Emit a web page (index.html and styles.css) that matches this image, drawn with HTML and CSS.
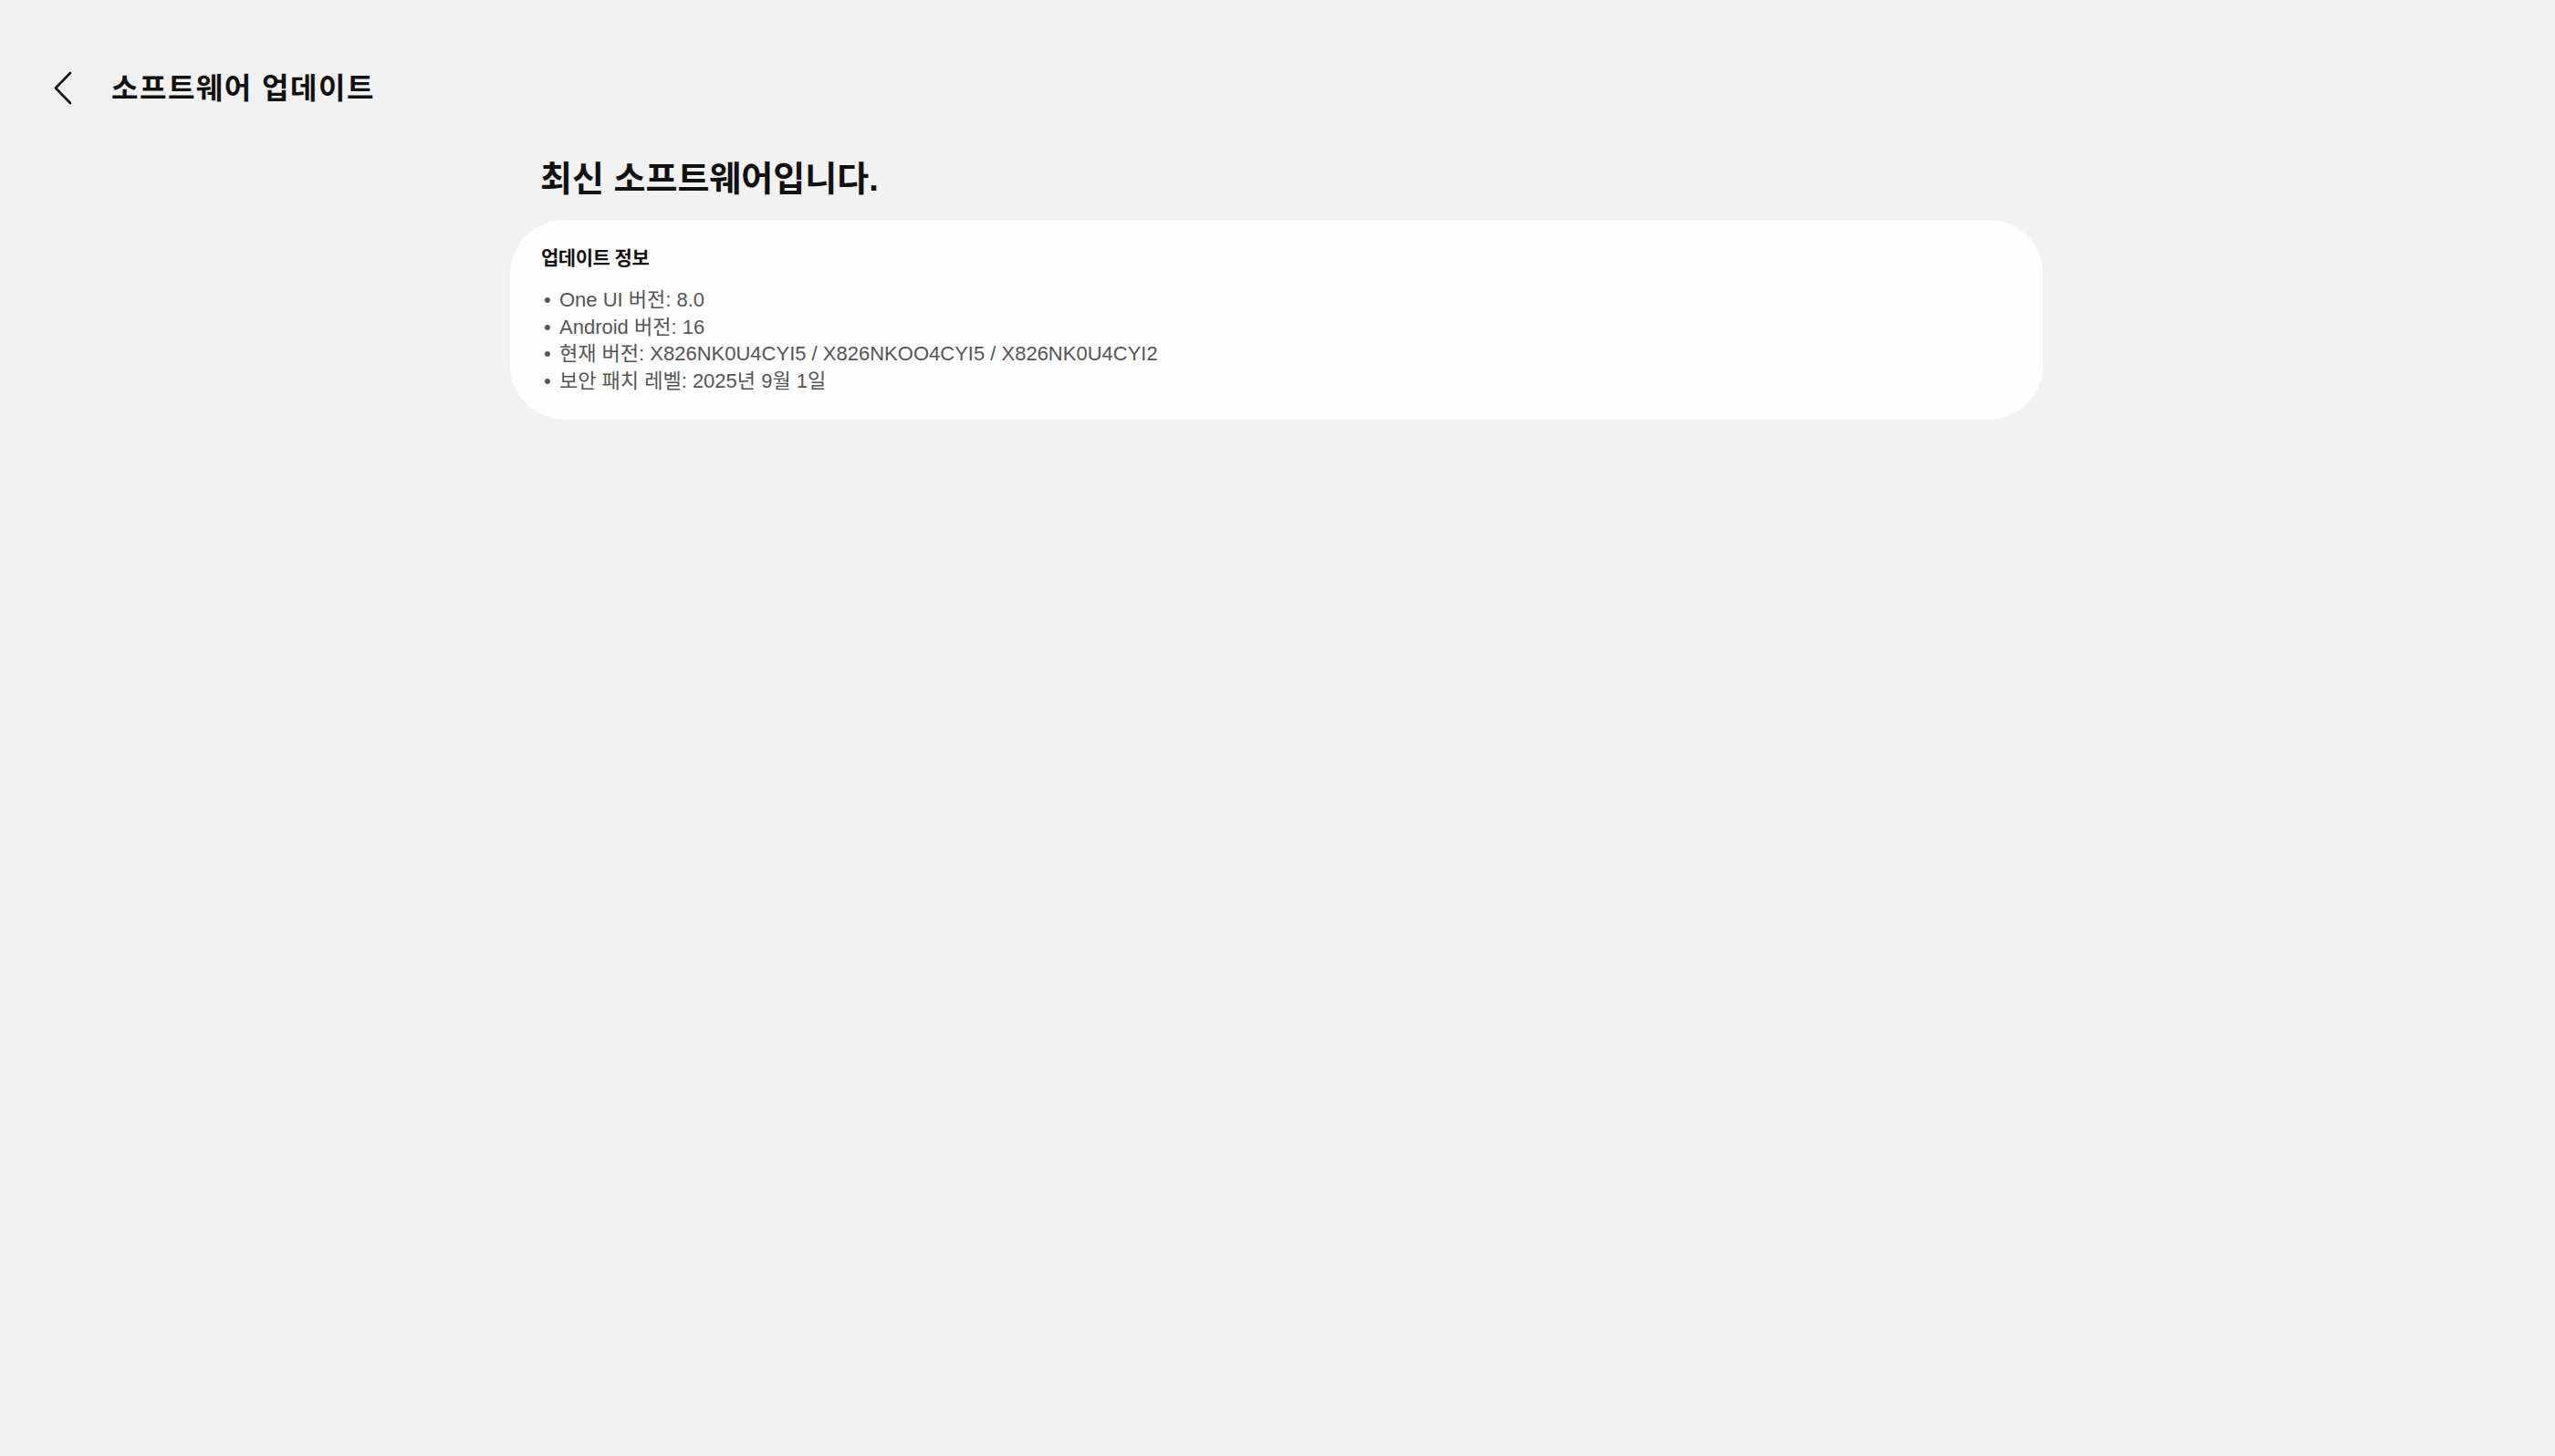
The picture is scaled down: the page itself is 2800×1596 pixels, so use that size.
FILE: index.html
```html
<!DOCTYPE html>
<html lang="ko">
<head>
    <meta charset="UTF-8">
    <meta name="viewport" content="width=device-width, initial-scale=1.0">
    <title>소프트웨어 업데이트</title>
    <link rel="stylesheet" href="styles.css">
</head>
<body>
    <div class="topbar">
        <button class="back-btn" aria-label="뒤로">
            <svg width="22" height="37" viewBox="0 0 22 37">
                <path d="M19 2 L3 18.5 L19 35" fill="none" stroke="#111" stroke-width="2.6" stroke-linecap="round" stroke-linejoin="round"/>
            </svg>
        </button>
        <div class="page-title">소프트웨어 업데이트</div>
    </div>

    <div class="content">
        <h1 class="status">최신 소프트웨어입니다.</h1>

        <!-- 업데이트 정보 카드 -->
        <div class="card">
            <h3 class="card-title">업데이트 정보</h3>
            <ul class="info-list">
                <li><span class="dot">•</span>One UI 버전: 8.0</li>
                <li><span class="dot">•</span>Android 버전: 16</li>
                <li><span class="dot">•</span>현재 버전: X826NK0U4CYI5 / X826NKOO4CYI5 / X826NK0U4CYI2</li>
                <li><span class="dot">•</span>보안 패치 레벨: 2025년 9월 1일</li>
            </ul>
        </div>
    </div>
</body>
</html>
```

FILE: styles.css
```css
body {
    font-family: "Liberation Sans", "Noto Sans CJK KR", sans-serif;
    background-color: #f2f2f3;
    margin: 0;
    padding: 0;
    color: #111;
}
.topbar {
    display: flex;
    align-items: center;
    padding: 77px 0 0 58px;
}
.back-btn {
    background: none;
    border: none;
    padding: 0;
    width: 22px;
    height: 37px;
    cursor: pointer;
}
.back-btn svg {
    display: block;
}
.page-title {
    margin-left: 42px;
    padding-top: 2px;
    font-size: 32px;
    font-weight: 700;
    letter-spacing: 1.5px;
    line-height: 37px;
}
.content {
    margin-left: 559px;
    width: 1680px;
}
.status {
    margin: 55px 0 0 33px;
    font-size: 38px;
    font-weight: 700;
    letter-spacing: 0;
    line-height: 50px;
}
.card {
    margin-top: 20px;
    background-color: #fefefe;
    border-radius: 60px;
    padding: 27px 34px 26px;
    box-sizing: border-box;
    height: 219px;
}
.card-title {
    margin: 0;
    font-size: 21px;
    font-weight: 700;
    letter-spacing: -0.5px;
    line-height: 30px;
}
.info-list {
    list-style: none;
    margin: 16px 0 0 0;
    padding: 0;
    font-size: 22px;
    line-height: 29.5px;
    color: #555;
}
.dot {
    display: inline-block;
    width: 17px;
    padding-left: 3px;
}
```
